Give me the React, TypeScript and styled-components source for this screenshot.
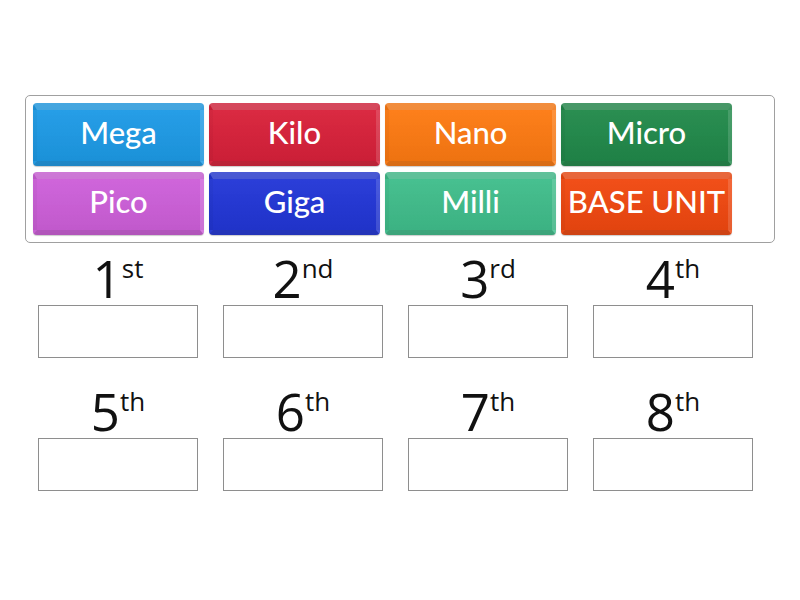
import React from "react";
import styled, { createGlobalStyle } from "styled-components";

const GlobalStyle = createGlobalStyle`
  html, body {
    margin: 0;
    padding: 0;
    background: #ffffff;
  }
`;

const Page = styled.main`
  width: 800px;
  height: 600px;
  padding-top: 95px;
  box-sizing: border-box;
`;

const Bank = styled.section`
  margin-left: 25px;
  width: 750px;
  height: 148px;
  box-sizing: border-box;
  border: 1px solid #a0a0a0;
  border-radius: 5px;
  padding: 7px 7px;
  display: grid;
  grid-template-columns: repeat(4, 171px);
  grid-auto-rows: 63px;
  column-gap: 5px;
  row-gap: 6px;
`;

const Tile = styled.div<{ $bg: string }>`
  background-image: linear-gradient(
    to bottom,
    rgba(255, 255, 255, 0.04),
    rgba(0, 0, 0, 0.06)
  );
  background-color: ${(p) => p.$bg};
  border-radius: 4px;
  box-sizing: border-box;
  border-style: solid;
  border-width: 7px 4px 5px 4px;
  border-top-color: rgba(255, 255, 255, 0.18);
  border-left-color: rgba(0, 0, 0, 0.03);
  border-right-color: rgba(255, 255, 255, 0.14);
  border-bottom-color: rgba(0, 0, 0, 0.14);
  box-shadow: 0 1px 1px rgba(0, 0, 0, 0.2);
  display: flex;
  align-items: center;
  justify-content: center;
  color: #ffffff;
  font-family: "Lato", "Open Sans", sans-serif;
  font-size: 31px;
  font-weight: 500;
  white-space: nowrap;
  padding-bottom: 7px;
`;

const Slots = styled.section`
  margin-left: 38px;
  margin-top: 13px;
  display: grid;
  grid-template-columns: repeat(4, 160px);
  column-gap: 25px;
  row-gap: 31px;
`;

const Slot = styled.div`
  display: flex;
  flex-direction: column;
  align-items: center;
`;

const Label = styled.div`
  font-family: "Open Sans", sans-serif;
  font-size: 51px;
  line-height: 44px;
  height: 44px;
  color: #111111;
  margin-bottom: 5px;
  white-space: nowrap;
`;

const Sup = styled.sup`
  font-size: 26px;
  vertical-align: 0;
  position: relative;
  top: -20px;
`;

const Box = styled.div`
  width: 160px;
  height: 53px;
  box-sizing: border-box;
  border: 1px solid #8e8e8e;
  background: #ffffff;
`;

const tiles = [
  { text: "Mega", bg: "#1d9ae6" },
  { text: "Kilo", bg: "#d8213a" },
  { text: "Nano", bg: "#fd7a12" },
  { text: "Micro", bg: "#21894a" },
  { text: "Pico", bg: "#cd5fd9" },
  { text: "Giga", bg: "#2236d6" },
  { text: "Milli", bg: "#40bd8b" },
  { text: "BASE UNIT", bg: "#f04810" },
];

const slots = [
  ["1", "st"],
  ["2", "nd"],
  ["3", "rd"],
  ["4", "th"],
  ["5", "th"],
  ["6", "th"],
  ["7", "th"],
  ["8", "th"],
];

const App: React.FC = () => (
  <>
    <GlobalStyle />
    <Page>
      <Bank>
        {tiles.map((t) => (
          <Tile key={t.text} $bg={t.bg}>
            {t.text}
          </Tile>
        ))}
      </Bank>
      <Slots>
        {slots.map(([n, s]) => (
          <Slot key={n}>
            <Label>
              {n}
              <Sup>{s}</Sup>
            </Label>
            <Box />
          </Slot>
        ))}
      </Slots>
    </Page>
  </>
);

export default App;
